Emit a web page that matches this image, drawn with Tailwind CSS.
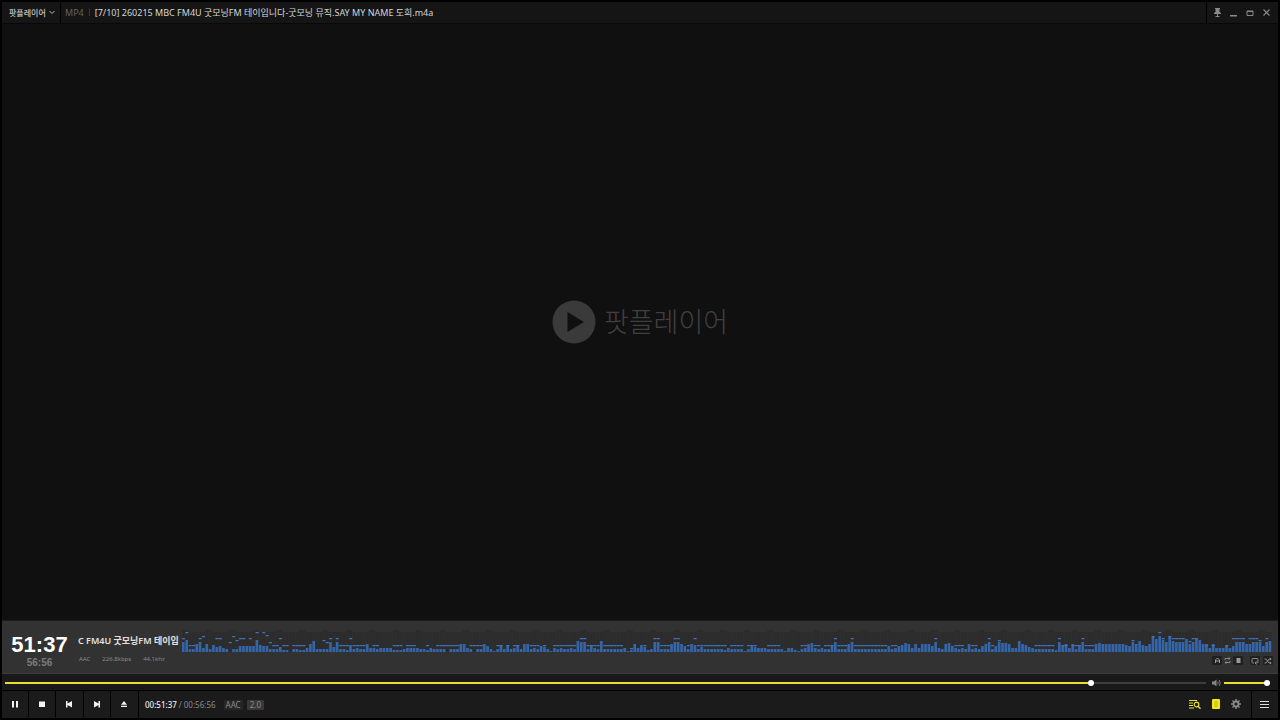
<!DOCTYPE html>
<html lang="ko">
<head>
<meta charset="utf-8">
<meta name="viewport" content="width=device-width, initial-scale=1">
<title>팟플레이어</title>
<script src="https://cdn.jsdelivr.net/npm/@tailwindcss/browser@4"></script>
</head>
<body class="flex min-h-screen flex-col bg-black p-[2px] font-['Noto_Sans','Noto_Sans_CJK_KR',sans-serif] text-[#d6d6d6]">

<header class="flex h-[22px] shrink-0 items-stretch border-b border-[#080808] bg-[#151515]">
  <button class="flex w-[59px] shrink-0 items-center gap-[3px] border-r border-black pl-[7px] text-[8px] leading-3 font-medium whitespace-nowrap text-[#c4c4c4]">팟플레이어
    <svg class="h-[5px] w-[6px]" viewBox="0 0 6 5" fill="none" stroke="#bbb"><path d="M.5 1 3 3.5 5.500 1"/></svg>
  </button>
  <div class="flex min-w-0 flex-1 items-center pl-1 text-[9px] leading-3 whitespace-nowrap">
    <span class="text-[#626262]">MP4</span>
    <span class="mx-[5px] h-[7px] w-px bg-[#3a3a3a]"></span>
    <h1 class="truncate">[7/10] 260215 MBC FM4U 굿모닝FM 테이입니다-굿모닝 뮤직.SAY MY NAME 도희.m4a</h1>
  </div>
  <div class="flex w-[72px] shrink-0 items-center justify-between border-l border-black pr-[7px] pl-[6px] text-[#8a8a8a]">
    <button aria-label="항상 위"><svg class="size-[9px]" viewBox="0 0 9 9" fill="currentColor"><path d="M2 0h5v1H6.500v3L8 5v1H5v2h1.500v1h-4V8H4V6H1V5l1.500-1V1H2z"/></svg></button>
    <button aria-label="최소화"><svg class="size-[9px]" viewBox="0 0 9 9"><path d="M1 7h7v1.500H1z" fill="currentColor"/></svg></button>
    <button aria-label="최대화"><svg class="size-[9px]" viewBox="0 0 9 9" fill="none" stroke="currentColor"><path d="M1 3h6v4.500H1zM1 3.500h6"/></svg></button>
    <button aria-label="닫기"><svg class="size-[9px]" viewBox="0 0 9 9" fill="none" stroke="currentColor" stroke-width="1.100"><path d="m1.500 1.500 6 6m0-6-6 6"/></svg></button>
  </div>
</header>

<main class="flex flex-1 items-center justify-center gap-2 bg-[#101010]">
  <svg class="size-11" viewBox="0 0 44 44"><circle cx="22" cy="22" r="21.500" fill="#3a3a3a"/><path d="M15.500 12 32 22 15.500 32z" fill="#101010"/></svg>
  <span class="pb-[2px] font-['Noto_Sans_CJK_KR',sans-serif] text-[27px] leading-10 font-light text-[#404040]">팟플레이어</span>
</main>

<footer class="shrink-0">
  <section class="flex h-[54px] border-t border-b border-t-[#1c1c1c] border-b-[#3c3c3c] bg-[#323232]" aria-label="재생 정보">
    <div class="flex w-[75px] shrink-0 flex-col items-center pt-[14px] font-['Liberation_Sans',sans-serif] font-bold">
      <span class="text-[22px] leading-5 text-white">51:37</span>
      <span class="text-[10px] leading-4 text-[#7c7c7c]">56:56</span>
    </div>
    <div class="w-[105px] shrink-0 overflow-hidden pt-3 pl-px whitespace-nowrap">
      <p class="w-[101px] overflow-hidden text-[9px] leading-4 font-semibold text-[#e2e2e2]">C FM4U 굿모닝FM 테이입니다</p>
      <p class="flex gap-3 pt-1 pl-px text-[6px] leading-3 text-[#8a8a8a]"><span>AAC</span><span>226.8kbps</span><span>44.1khz</span></p>
    </div>
    <div class="min-w-0 flex-1 pt-2 pr-[6px]">
      <svg id="spectrum" class="h-6 w-full" viewBox="0 0 326 24" preserveAspectRatio="none" role="img" aria-label="스펙트럼">
        <path id="columns" fill="#2c2c2c"/><path id="bars" fill="#3465a8"/><path id="peaks" fill="#4273b8"/>
      </svg>
      <div class="-mr-px flex justify-end gap-px pt-[3px] text-[#989898]">
        <button class="flex h-[9px] w-[10px] items-center justify-center rounded-[1px] bg-[#202020]" aria-label="구간 시작"><svg class="size-[7px]" viewBox="0 0 7 7" fill="none" stroke="currentColor"><path d="M1.500 6V3l2-2 2 2v3m-4-2h4"/></svg></button>
        <button class="flex h-[9px] w-[9px] items-center justify-center" aria-label="구간 반복"><svg class="size-[7px]" viewBox="0 0 7 7" fill="none" stroke="currentColor" stroke-width=".8"><path d="M1 3V1.500h5M4.500.3 6 1.500 4.500 2.700M6 4v1.500H1M2.500 4.300 1 5.500 2.500 6.700"/></svg></button>
        <button class="flex h-[9px] w-[10px] items-center justify-center rounded-[1px] bg-[#202020]" aria-label="구간 끝"><svg class="size-[7px]" viewBox="0 0 7 7" fill="currentColor"><path d="M1.500 1h4v5h-4z"/></svg></button>
        <button class="ml-[6px] flex h-[9px] w-[10px] items-center justify-center rounded-[1px] bg-[#202020]" aria-label="반복"><svg class="size-[8px]" viewBox="0 0 8 8" fill="none" stroke="currentColor" stroke-width=".9"><path d="M3 6H2Q1 6 1 5V2.500q0-1 1-1h4q1 0 1 1V5q0 1-1 1H4.500M5.500 4.300 4 6l1.500 1.500"/></svg></button>
        <button class="ml-[2px] flex h-[9px] w-[10px] items-center justify-center rounded-[1px] bg-[#202020]" aria-label="무작위"><svg class="size-[8px]" viewBox="0 0 8 8" fill="none" stroke="currentColor" stroke-width=".9"><path d="M.5 2H2l3 4h2M.5 6H2l3-4h2M6 .8 7.200 2 6 3.200M6 4.800 7.200 6 6 7.200"/></svg></button>
      </div>
    </div>
  </section>

  <section class="flex h-4 items-center bg-[#191919] pt-px pr-2 pl-[3px]" aria-label="탐색 및 음량">
    <input type="range" aria-label="재생 위치" min="0" max="3416" value="3097" class="h-[6px] min-w-0 flex-1 appearance-none bg-[linear-gradient(90deg,#e9dd2e_90.400%,#3d3d3d_90.400%)] bg-[length:100%_2px] bg-center bg-no-repeat [&::-webkit-slider-thumb]:size-[6px] [&::-webkit-slider-thumb]:appearance-none [&::-webkit-slider-thumb]:rounded-full [&::-webkit-slider-thumb]:bg-white">
    <button class="mr-[3px] ml-[6px] shrink-0 text-[#858585]" aria-label="음소거"><svg class="h-[8px] w-[9px]" viewBox="0 0 9 8" fill="none" stroke="currentColor" stroke-width=".9"><path fill="currentColor" stroke="none" d="M0 2.500h2L4.500.5v7L2 5.500H0z"/><path d="M5.700 2.500q1 1.500 0 3M7.200 1q2 3 0 6"/></svg></button>
    <input type="range" aria-label="음량" min="0" max="100" value="100" class="h-[6px] w-[46px] shrink-0 appearance-none bg-[#e9dd2e] bg-clip-content py-[2px] [&::-webkit-slider-thumb]:-my-[2px] [&::-webkit-slider-thumb]:size-[6px] [&::-webkit-slider-thumb]:appearance-none [&::-webkit-slider-thumb]:rounded-full [&::-webkit-slider-thumb]:bg-white">
  </section>

  <section class="flex h-7 items-stretch border-t border-black bg-[#1b1b1b]" aria-label="재생 제어">
    <div class="grid w-[137px] shrink-0 grid-cols-5 divide-x divide-black border-r border-black pb-px text-[#f2f2f2]">
      <button class="grid place-items-center" aria-label="일시정지"><svg class="size-2" viewBox="0 0 8 8" fill="currentColor"><path d="M1 1h2v6.500H1zM5 1h2v6.500H5z"/></svg></button>
      <button class="grid place-items-center" aria-label="정지"><svg class="size-2" viewBox="0 0 8 8" fill="currentColor"><path d="M1 1.500h6v5.500H1z"/></svg></button>
      <button class="grid place-items-center" aria-label="이전"><svg class="size-2" viewBox="0 0 8 8" fill="currentColor"><path d="M1 1h1.500v2.500L7 1v6.500L2.500 5v2.500H1z"/></svg></button>
      <button class="grid place-items-center" aria-label="다음"><svg class="size-2" viewBox="0 0 8 8" fill="currentColor"><path d="M7 1H5.500v2.500L1 1v6.500L5.500 5v2.500H7z"/></svg></button>
      <button class="grid place-items-center" aria-label="열기"><svg class="size-2" viewBox="0 0 8 8" fill="currentColor"><path d="M4 1 7 4.800H1zM1 5.700h6v1.300H1z"/></svg></button>
    </div>
    <div class="flex flex-1 items-center pl-[6px] text-[8px] leading-3 text-[#8a8a8a]">
      <span class="font-medium text-[#efefef]">00:51:37</span><span class="mx-[2px]">/</span><span>00:56:56</span>
      <span class="ml-[8px] rounded-[1px] bg-[#262626] px-[2px] leading-[10px]">AAC</span>
      <span class="ml-[4px] rounded-[1px] bg-[#383838] px-[3px] leading-[10px]">2.0</span>
    </div>
    <div class="flex shrink-0 items-center gap-[10px] pr-[10px] pb-px">
      <button aria-label="목록 검색"><svg class="h-[10px] w-[12px]" viewBox="0 0 12 10" fill="none" stroke="#e9e12c" stroke-width="1.200"><path d="M0 1.500h8M0 4h4M0 6.500h4M0 9h5"/><circle cx="7.500" cy="5.500" r="2.300"/><path d="m9 7.200 2.500 2.500" stroke-width="1.500"/></svg></button>
      <button aria-label="재생 목록"><svg class="size-[10px]" viewBox="0 0 10 10"><rect x="1" y="0" width="8" height="10" rx="1" fill="#f4e916"/><path d="M3 3h4M3 5h4M3 7h4" stroke="#b0a71d" stroke-width=".9"/></svg></button>
      <button aria-label="설정"><svg class="size-[10px]" viewBox="0 0 10 10" fill="none" stroke="#8a8a8a"><circle cx="5" cy="5" r="2.500" stroke-width="1.800"/><path stroke-width="1.500" d="M5 0v2M5 8v2M0 5h2M8 5h2M1.500 1.500l1.300 1.300M7.200 7.200l1.300 1.300M8.500 1.500 7.200 2.800M2.800 7.200 1.500 8.500"/></svg></button>
    </div>
    <button class="grid w-[27px] shrink-0 place-items-center border-l border-black pr-px pb-px" aria-label="메뉴"><svg class="size-[9px]" viewBox="0 0 9 9" stroke="#dedede"><path d="M0 1.500h9M0 4.500h9M0 7.500h9"/></svg></button>
  </section>
</footer>

<script>
// Spectrum levels in base 36, one character per frequency band.
const bands = [
  { at: 0, level: 'ac338a4837564303366666c7663335220332248b3333a5a33273433844344442223444433243333',
    peaks: '0e 1k 2-3:7 5e 6g 10-11:e 14a 15g 16c 17-18:e 20e 22k 24k 25h 26a 27-28:7 29e 30-31:7 33-36:7 42c 43a 44e 46e 47-49:7 50e 51-54:7 57-58:7 63-65:7 67-69:7 73:7 76-79:7' },
  { at: 80, level: '333884303386313736346388343653143433' + '43baa3643b333333412847523aa3338aa863873533333',
    peaks: '0-2:7 6-9:7 14-15:7 17:7 19-20:7 24-26:7 28:7 31-37:7 39-40:e 41-44:7 46-51:7 54:4 58:7 61-62:e 63-65:7 67-68:e 71:7 73e 74-80:7' },
  { at: 161, level: '324333313654443333314421348943433' + '6a3338a333333333363467984848886a438964343834368a',
    peaks: '0-1:7 3-6:7 8-10:7 14-17:7 24-25:7 28-29:7 31-33:7 34e 35-37:7 39e 40-49:7 51-52:7 64e 70-72:7 75-76:7 80e' },
  { at: 242, level: '36a99844b87543333332a68483' + '6a3338988888887' + '6a8b768fdgcafbaaad8adc8848444646aaa88aaa6ab',
    peaks: '0:7 2c 13-18:7 20e 21-22:7 24-26:7 27e 28-30:7 42c 48g 50k 51e 53g 54-57:e 59b 60-61:e 64:7 66:7 70:7 72-75:e 77-79:e 80c 82e' }
];
const base = 23;
let bars = '', peaks = '', columns = '';
for (let i = 0; i < 326; i++) columns += `M${i} ${i % 7 < 2 ? 1 : 3}h.85V${base}h-.85z`;
for (const { at, level, peaks: marks } of bands) {
  [...level].forEach((c, i) => {
    const h = parseInt(c, 36);
    if (h && at + i < 326) bars += `M${at + i} ${base}v-${h}h.8v${h}z`;
  });
  for (const mark of marks.split(' ')) {
    const [, from, to, h] = mark.match(/^(\d+)(?:-(\d+))?:?(\w)$/);
    for (let i = +from; i <= +(to ?? from); i++) peaks += `M${at + i} ${base - parseInt(h, 36)}h.9v1.200h-.9z`;
  }
}
document.getElementById('columns').setAttribute('d', columns);
document.getElementById('bars').setAttribute('d', bars);
document.getElementById('peaks').setAttribute('d', peaks);
</script>
</body>
</html>
